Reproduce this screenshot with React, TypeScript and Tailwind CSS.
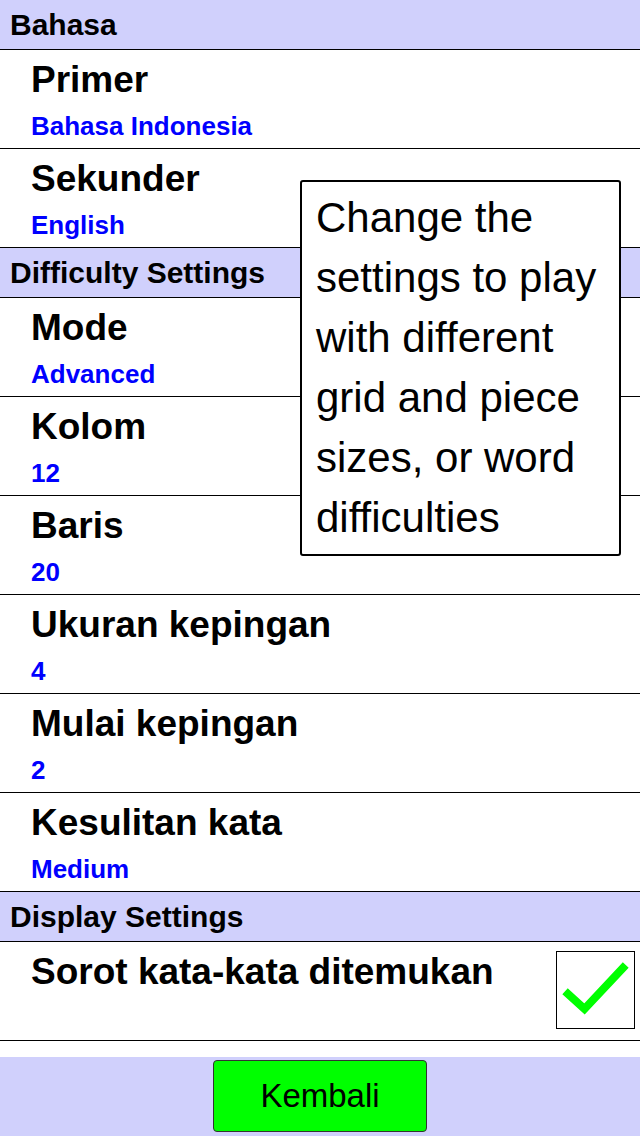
import React from "react";

const font = { fontFamily: '"Liberation Sans", Arial, sans-serif' };

function Header({ title }: { title: string }) {
  return (
    <div className="h-[50px] bg-[#d0d0fc] border-b border-black pl-[10px] text-[30px] font-bold leading-[49px] text-black">
      {title}
    </div>
  );
}

function Row({ title, value }: { title: string; value: string }) {
  return (
    <div className="h-[99px] border-b border-black pl-[31px] pt-[9px]">
      <div className="text-[37px] font-bold leading-[42px] text-black whitespace-nowrap">{title}</div>
      <div className="mt-[10px] text-[26px] font-bold leading-[30px] text-[#0000ff]">{value}</div>
    </div>
  );
}

export default function App() {
  return (
    <div className="relative w-[640px] h-[1136px] bg-white overflow-hidden" style={font}>
      <Header title="Bahasa" />
      <Row title="Primer" value="Bahasa Indonesia" />
      <Row title="Sekunder" value="English" />
      <Header title="Difficulty Settings" />
      <Row title="Mode" value="Advanced" />
      <Row title="Kolom" value="12" />
      <Row title="Baris" value="20" />
      <Row title="Ukuran kepingan" value="4" />
      <Row title="Mulai kepingan" value="2" />
      <Row title="Kesulitan kata" value="Medium" />
      <Header title="Display Settings" />
      <div className="h-[99px] border-b border-black pl-[31px] pr-[5px] pt-[9px] flex items-start justify-between">
        <div className="text-[37px] font-bold leading-[42px] text-black whitespace-nowrap">
          Sorot kata-kata ditemukan
        </div>
        <div className="mt-[0px] w-[79px] h-[78px] border border-black flex items-center justify-center">
          <svg width="77" height="76" viewBox="0 0 77 76">
            <path d="M11 42 L27.5 57 L66 16" fill="none" stroke="#00ff00" strokeWidth="8" strokeLinecap="square" strokeLinejoin="miter" />
          </svg>
        </div>
      </div>
      <div className="h-[16px]" />
      <div className="h-[79px] bg-[#d0d0fc] flex justify-center pt-[3px]">
        <button className="w-[214px] h-[72px] bg-[#00ff00] border border-[#333333] rounded-[4px] text-[33px] text-black leading-[70px]" style={font}>
          Kembali
        </button>
      </div>

      <div className="absolute left-[300px] top-[180px] w-[321px] h-[376px] bg-white border-2 border-black rounded-[3px] pl-[14px] pt-[6px] text-[42px] leading-[60px] text-black">
        Change the settings to play with different grid and piece sizes, or word difficulties
      </div>
    </div>
  );
}
